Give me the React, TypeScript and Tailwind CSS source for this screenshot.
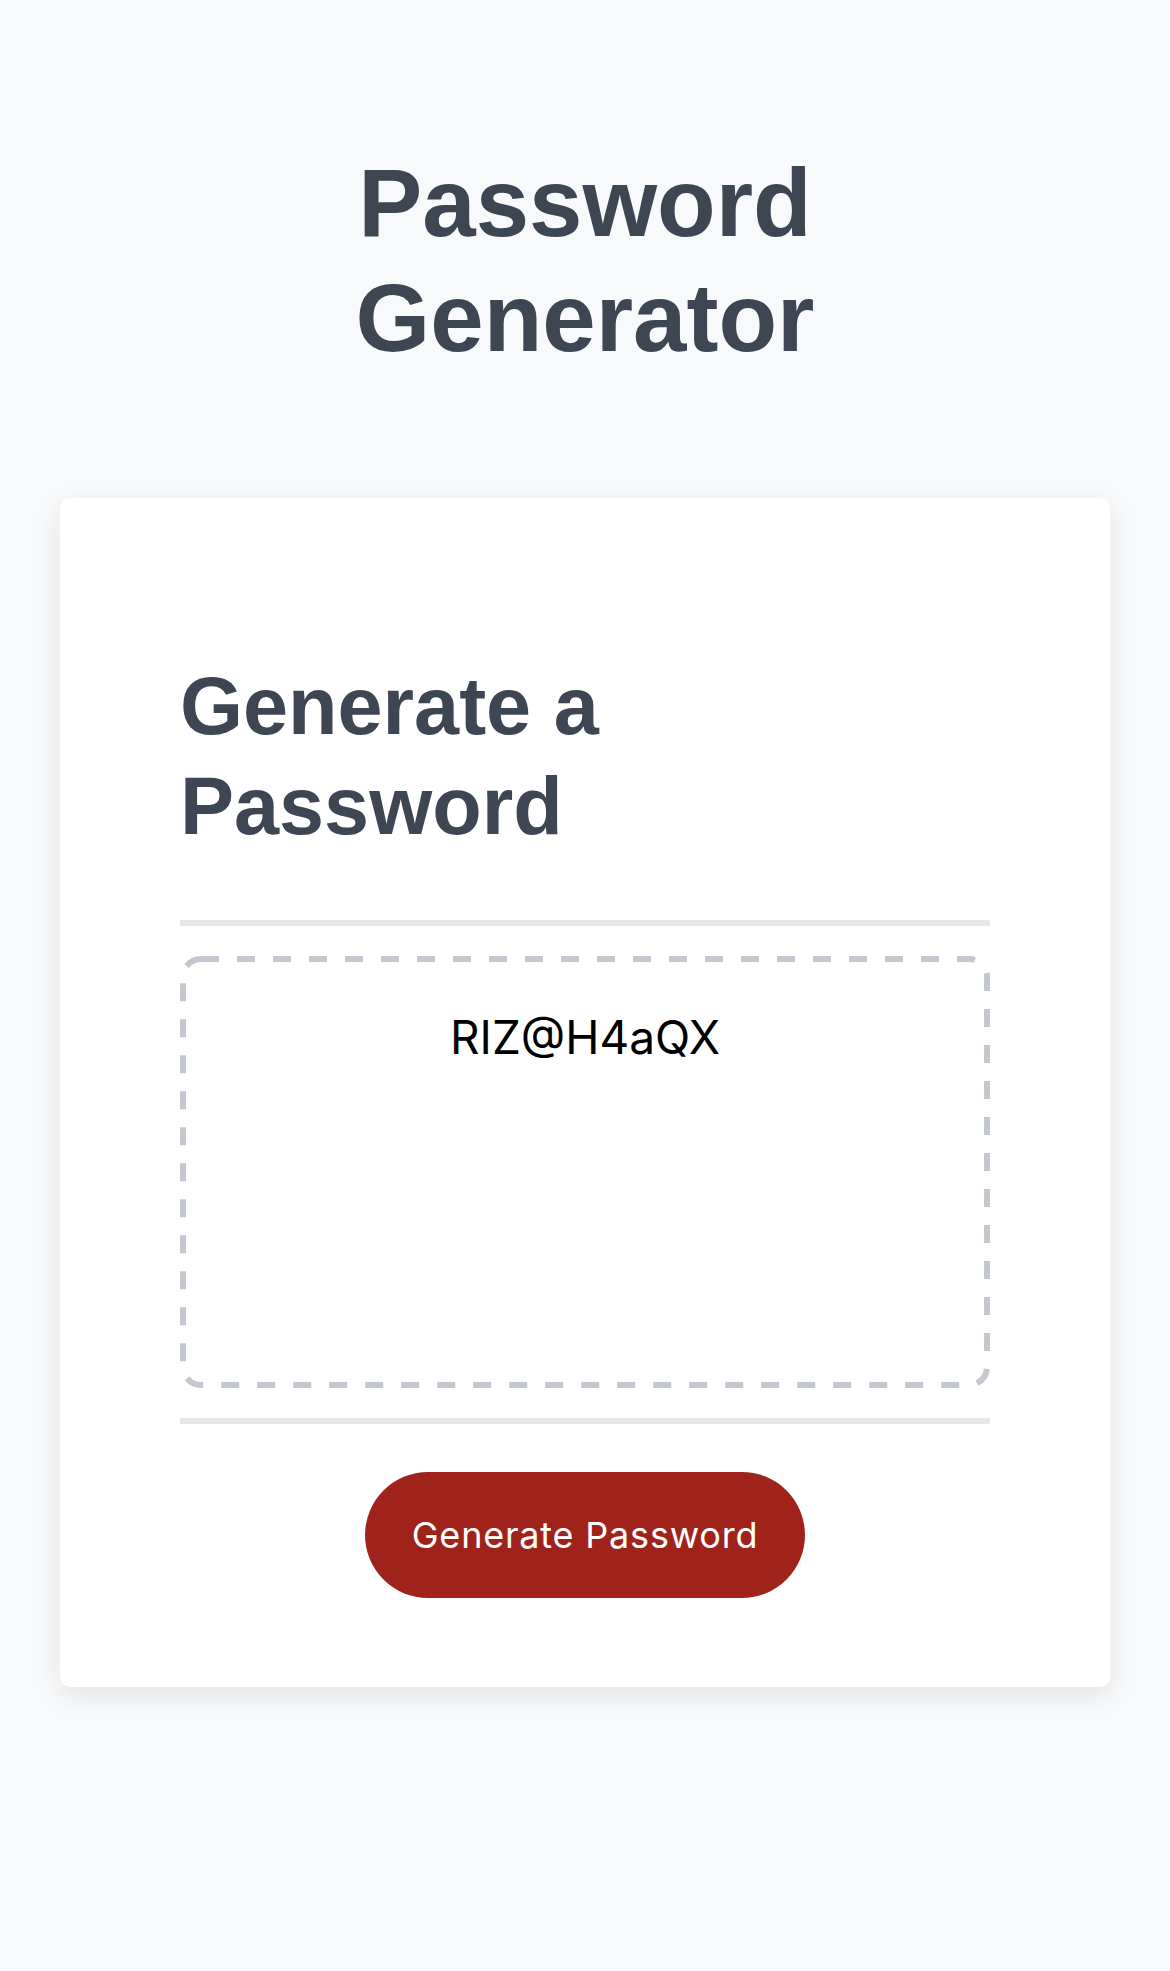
import React from "react";

export default function App() {
  return (
    <div className="min-h-[1971px] w-full bg-[#f8f9fa] pt-[145px] pb-[284px]">
      <h1 className="mx-auto w-[560px] text-center font-['Liberation_Sans',Arial,sans-serif] text-[96px] font-bold leading-[115px] text-[#3d4652]">
        Password Generator
      </h1>
      <div className="mx-[60px] mt-[123px] rounded-[10px] bg-white px-[120px] pt-[158px] pb-[89px] shadow-[0_8px_28px_rgba(0,0,0,0.09)]">
        <h2 className="max-w-[540px] font-['Liberation_Sans',Arial,sans-serif] text-[81px] font-bold leading-[100px] text-[#3d4652]">
          Generate a Password
        </h2>
        <div className="mt-[64px] h-[6px] w-full bg-[#e6e7e9]" />
        <div className="relative mt-[30px] h-[432px] pt-[53px] text-center font-['Inter',sans-serif] text-[46px] leading-[56px] text-black">
          <svg
            className="pointer-events-none absolute inset-0 h-full w-full"
            viewBox="0 0 810 432"
            preserveAspectRatio="none"
          >
            <rect
              x="3"
              y="3"
              width="804"
              height="426"
              rx="18"
              ry="18"
              fill="none"
              stroke="#c3c7cf"
              strokeWidth="6"
              strokeDasharray="18 18"
            />
          </svg>
          <span className="relative">RIZ@H4aQX</span>
        </div>
        <div className="mt-[30px] h-[6px] w-full bg-[#e6e7e9]" />
        <div className="mt-[48px] flex justify-center">
          <button className="h-[126px] rounded-full bg-[#9f231b] px-[47px] font-['Inter',sans-serif] text-[36px] tracking-[0.8px] text-white">
            Generate Password
          </button>
        </div>
      </div>
    </div>
  );
}
